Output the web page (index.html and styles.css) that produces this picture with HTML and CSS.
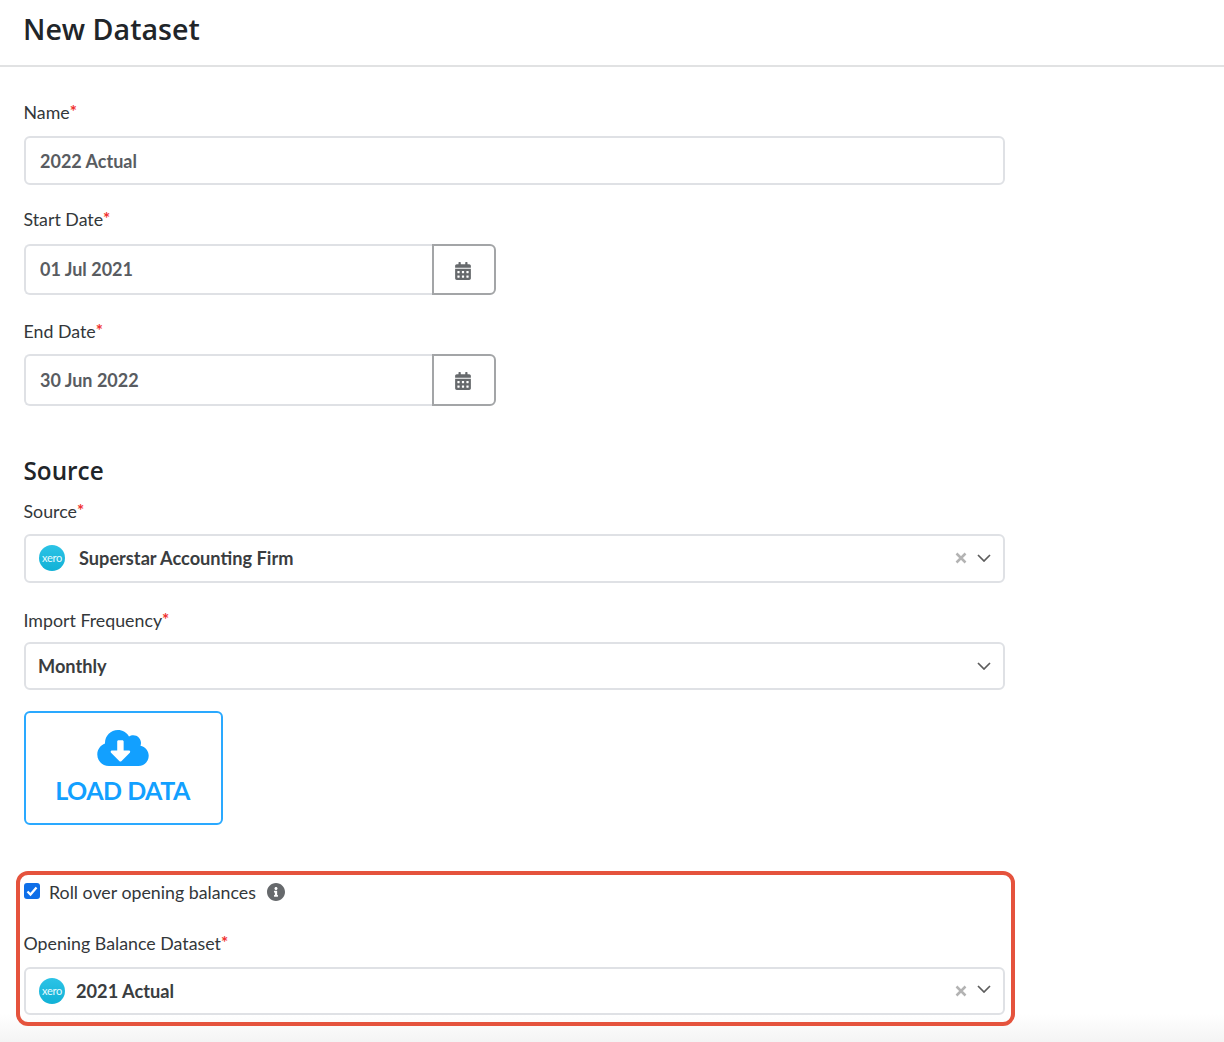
FILE: index.html
```html
<!DOCTYPE html>
<html lang="en">
<head>
<meta charset="utf-8">
<title>New Dataset</title>
<link rel="stylesheet" href="styles.css">
</head>
<body>
<header class="page-header"><h1>New Dataset</h1></header>
<main class="form">
  <div class="label name-label">Name<span class="req">*</span></div>
  <div class="field name-field"><span class="val">2022 Actual</span></div>

  <div class="label start-label">Start Date<span class="req">*</span></div>
  <div class="date">
    <div class="date-input"><span class="val">01 Jul 2021</span></div>
    <div class="date-btn"><svg class="cal" viewBox="0 0 448 512"><path d="M0 464c0 26.500 21.500 48 48 48h352c26.500 0 48-21.500 48-48V192H0v272zm320-196c0-6.600 5.400-12 12-12h40c6.600 0 12 5.400 12 12v40c0 6.600-5.400 12-12 12h-40c-6.600 0-12-5.400-12-12v-40zm0 128c0-6.600 5.400-12 12-12h40c6.600 0 12 5.400 12 12v40c0 6.600-5.400 12-12 12h-40c-6.600 0-12-5.400-12-12v-40zM192 268c0-6.600 5.400-12 12-12h40c6.600 0 12 5.400 12 12v40c0 6.600-5.400 12-12 12h-40c-6.600 0-12-5.400-12-12v-40zm0 128c0-6.600 5.400-12 12-12h40c6.600 0 12 5.400 12 12v40c0 6.600-5.400 12-12 12h-40c-6.600 0-12-5.400-12-12v-40zM64 268c0-6.600 5.400-12 12-12h40c6.600 0 12 5.400 12 12v40c0 6.600-5.400 12-12 12H76c-6.600 0-12-5.400-12-12v-40zm0 128c0-6.600 5.400-12 12-12h40c6.600 0 12 5.400 12 12v40c0 6.600-5.400 12-12 12H76c-6.600 0-12-5.400-12-12v-40zM400 64h-48V16c0-8.800-7.200-16-16-16h-32c-8.800 0-16 7.200-16 16v48H160V16c0-8.800-7.200-16-16-16h-32c-8.800 0-16 7.200-16 16v48H48C21.500 64 0 85.500 0 112v48h448v-48c0-26.500-21.500-48-48-48z"/></svg></div>
  </div>

  <div class="label end-label">End Date<span class="req">*</span></div>
  <div class="date">
    <div class="date-input"><span class="val">30 Jun 2022</span></div>
    <div class="date-btn"><svg class="cal" viewBox="0 0 448 512"><path d="M0 464c0 26.500 21.500 48 48 48h352c26.500 0 48-21.500 48-48V192H0v272zm320-196c0-6.600 5.400-12 12-12h40c6.600 0 12 5.400 12 12v40c0 6.600-5.400 12-12 12h-40c-6.600 0-12-5.400-12-12v-40zm0 128c0-6.600 5.400-12 12-12h40c6.600 0 12 5.400 12 12v40c0 6.600-5.400 12-12 12h-40c-6.600 0-12-5.400-12-12v-40zM192 268c0-6.600 5.400-12 12-12h40c6.600 0 12 5.400 12 12v40c0 6.600-5.400 12-12 12h-40c-6.600 0-12-5.400-12-12v-40zm0 128c0-6.600 5.400-12 12-12h40c6.600 0 12 5.400 12 12v40c0 6.600-5.400 12-12 12h-40c-6.600 0-12-5.400-12-12v-40zM64 268c0-6.600 5.400-12 12-12h40c6.600 0 12 5.400 12 12v40c0 6.600-5.400 12-12 12H76c-6.600 0-12-5.400-12-12v-40zm0 128c0-6.600 5.400-12 12-12h40c6.600 0 12 5.400 12 12v40c0 6.600-5.400 12-12 12H76c-6.600 0-12-5.400-12-12v-40zM400 64h-48V16c0-8.800-7.200-16-16-16h-32c-8.800 0-16 7.200-16 16v48H160V16c0-8.800-7.200-16-16-16h-32c-8.800 0-16 7.200-16 16v48H48C21.500 64 0 85.500 0 112v48h448v-48c0-26.500-21.500-48-48-48z"/></svg></div>
  </div>

  <h2>Source</h2>
  <div class="label source-label">Source<span class="req">*</span></div>
  <div class="field select source-field">
    <span class="xero">xero</span>
    <span class="sel-text bold">Superstar Accounting Firm</span>
    <svg class="clear" viewBox="0 0 12 12"><path d="M1.500 1.500l9 9m0-9l-9 9"/></svg>
    <svg class="chev" viewBox="0 0 14 8"><path d="M1 1l6 6 6-6"/></svg>
  </div>

  <div class="label freq-label">Import Frequency<span class="req">*</span></div>
  <div class="field select freq-field">
    <span class="sel-text bold plain">Monthly</span>
    <svg class="chev" viewBox="0 0 14 8"><path d="M1 1l6 6 6-6"/></svg>
  </div>

  <div class="load">
    <svg class="cloud" viewBox="0 32 640 448"><path d="M537.600 226.600c4.100-10.700 6.400-22.400 6.400-34.600 0-53-43-96-96-96-19.700 0-38.100 6-53.300 16.200C367 64.200 315.300 32 256 32c-88.400 0-160 71.600-160 160 0 2.700.1 5.400.2 8.100C40.200 219.800 0 273.200 0 336c0 79.500 64.500 144 144 144h368c70.700 0 128-57.300 128-128 0-61.900-44-113.600-102.400-125.400zm-132.900 88.700L299.300 420.700c-6.200 6.200-16.400 6.200-22.600 0L171.300 315.300c-10.100-10.100-2.900-27.300 11.300-27.300H248V176c0-8.800 7.200-16 16-16h48c8.800 0 16 7.200 16 16v112h65.400c14.200 0 21.400 17.200 11.300 27.300z"/></svg>
    <span>LOAD DATA</span>
  </div>

  <section class="highlight">
    <div class="check-row">
      <span class="checkbox"><svg viewBox="0 0 16 16"><path d="M3.500 8.500l3 3 6-7"/></svg></span>
      <span class="check-label">Roll over opening balances</span>
      <svg class="info" viewBox="8 8 496 496"><path d="M256 8C119.043 8 8 119.083 8 256c0 136.997 111.043 248 248 248s248-111.003 248-248C504 119.083 392.957 8 256 8zm0 110c23.196 0 42 18.804 42 42s-18.804 42-42 42-42-18.804-42-42 18.804-42 42-42zm56 254c0 6.627-5.373 12-12 12h-88c-6.627 0-12-5.373-12-12v-24c0-6.627 5.373-12 12-12h12v-64h-12c-6.627 0-12-5.373-12-12v-24c0-6.627 5.373-12 12-12h64c6.627 0 12 5.373 12 12v100h12c6.627 0 12 5.373 12 12v24z"/></svg>
    </div>
    <div class="label balance-label">Opening Balance Dataset<span class="req">*</span></div>
    <div class="field select balance-field">
      <span class="xero">xero</span>
      <span class="sel-text medium">2021 Actual</span>
      <svg class="clear" viewBox="0 0 12 12"><path d="M1.500 1.500l9 9m0-9l-9 9"/></svg>
      <svg class="chev raised" viewBox="0 0 14 8"><path d="M1 1l6 6 6-6"/></svg>
    </div>
  </section>
</main>
</body>
</html>
```

FILE: styles.css
```css
* { box-sizing: border-box; }
html, body { height: 100%; }
body {
  margin: 0;
  height: 1042px;
  overflow: hidden;
  font-family: "Lato", "Liberation Sans", sans-serif;
  color: #2f3336;
  background: linear-gradient(to bottom, #fff 0, #fff 1014px, #f4f4f4 1042px);
}
.page-header {
  height: 67px;
  padding: 0 24px;
  border-bottom: 2px solid #e1e2e3;
  background: #fff;
}
h1 {
  margin: 0 0 0 -1px;
  padding-top: 8px;
  font-family: "Open Sans", sans-serif;
  font-size: 28.6px;
  line-height: 42px;
  font-weight: 600;
  color: #212529;
}
.form { padding: 0 24px; width: 1029px; }
.label {
  margin-left: -.5px;
  font-size: 17.8px;
  line-height: 24px;
  color: #33373a;
}
.req { color: #f0312f; font-size: 17px; font-weight: 700; position: relative; top: -1px; line-height: 1; }
.name-label { margin-top: 33px; }
.start-label { margin-top: 21.5px; }
.end-label { margin-top: 24px; }
.source-label { margin-top: 10px; }
.freq-label { margin-top: 25px; }
.field {
  display: flex;
  align-items: center;
  height: 49px;
  border: 2px solid #dfe1e5;
  border-radius: 6px;
  background: #fff;
  width: 981px;
}
.name-field { margin-top: 12px; padding-left: 14px; }
.val { font-size: 18px; color: #4b4f54; font-weight: 700; opacity: .92; }
.date { display: flex; width: 472px; height: 51px; margin-top: 13px; }
.end-label + .date { height: 52px; margin-top: 11px; }
.date-input {
  flex: 1;
  display: flex;
  align-items: center;
  padding: 0 0 0 14px;
  border: 2px solid #dfe1e5;
  border-right: 0;
  border-radius: 6px 0 0 6px;
}
.date-btn {
  width: 64px;
  display: flex;
  align-items: center;
  justify-content: center;
  padding: 3px 2px 0 0;
  border: 2px solid #a3a5a7;
  border-radius: 0 6px 6px 0;
}
.cal { width: 16px; height: 18px; fill: #66696c; }
h2 {
  margin: 47px 0 0 -.5px;
  font-family: "Open Sans", sans-serif;
  font-size: 24.3px;
  line-height: 36px;
  font-weight: 600;
  color: #212529;
}
.source-field { margin-top: 11px; padding: 0 12px 1px 13px; }
.freq-field { height: 48px; margin-top: 10px; padding: 0 12px 0 12px; }
.select .sel-text { flex: 1; font-size: 18.2px; color: #3a3d40; }
.bold { font-weight: 700; margin-left: 14px; }
.plain { margin-left: 0; }
.medium { font-weight: 700; margin-left: 11px; }
.xero {
  flex: none;
  width: 26px;
  height: 26px;
  border-radius: 50%;
  background: linear-gradient(to bottom, #2cc3e6, #11b1d6);
  color: #e6fbff;
  font-size: 11px;
  line-height: 26px;
  text-align: center;
  letter-spacing: -.3px;
}
.clear { width: 12px; height: 12px; margin-right: 10px; fill: none; stroke: #b3b3b3; stroke-width: 2.500; }
.chev { width: 14px; height: 8px; fill: none; stroke: #5c5c5c; stroke-width: 1.700; }
.raised { position: relative; top: -2px; }
.load {
  display: flex;
  flex-direction: column;
  align-items: center;
  width: 199px;
  height: 114px;
  margin-top: 21px;
  padding: 17px 2px 0 0;
  border: 2px solid #2aa9ff;
  border-radius: 6px;
  color: #12a0ff;
}
.cloud { width: 52px; height: 36px; fill: #12a0ff; }
.load span { margin-top: 8px; font-size: 25px; line-height: 32px; font-weight: 700; letter-spacing: -.5px; }
.highlight {
  width: 999px;
  height: 155px;
  margin: 46px 0 0 -8px;
  padding: 2px 4px 0 4px;
  border: 4px solid #e5533d;
  border-radius: 12px;
}
.check-row { display: flex; align-items: center; height: 30px; }
.checkbox {
  display: block;
  width: 16px;
  height: 16px;
  border-radius: 3px;
  background: #0f6fe8;
  margin-top: -1px;
}
.checkbox svg { display: block; width: 16px; height: 16px; fill: none; stroke: #fff; stroke-width: 2.300; }
.check-label { margin-left: 9px; font-size: 17.8px; color: #33373a; }
.info { width: 18px; height: 18px; margin-left: 11px; fill: #66696c; }
.balance-label { margin-top: 24px; }
.balance-field { margin-top: 12px; height: 48px; padding: 0 12px 0 13px; }
```
